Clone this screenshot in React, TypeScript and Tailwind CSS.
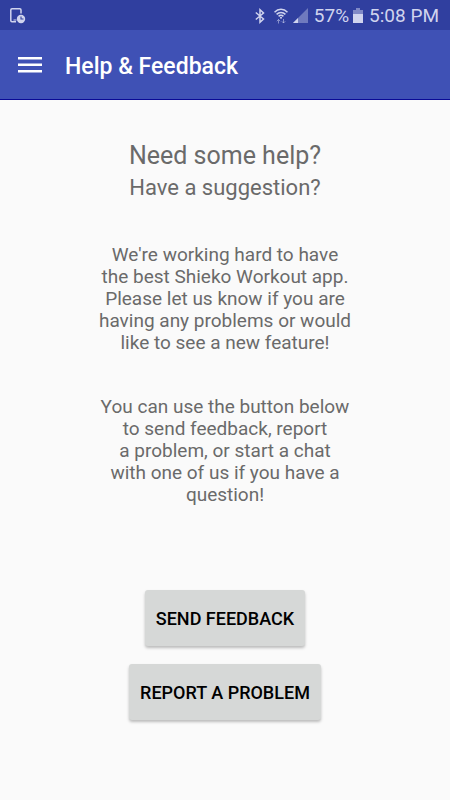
import React from 'react';

const intro = [
    "We're working hard to have",
    "the best Shieko Workout app.",
    "Please let us know if you are",
    "having any problems or would",
    "like to see a new feature!",
];

const instructions = [
    "You can use the button below",
    "to send feedback, report",
    "a problem, or start a chat",
    "with one of us if you have a",
    "question!",
];

const actions = ["Send feedback", "Report a problem"];

function StatusBar() {
    return (
        <div className="flex h-[30px] items-center justify-between bg-[#303f9f] pl-[10px] pr-[11px] pt-px text-[#d0d4ee]">
            <svg width="16" height="16" viewBox="0 0 16 16" fill="none">
                <path d="M11 5.5V2a1.2 1.2 0 0 0-1.2-1.2H2A1.2 1.2 0 0 0 .8 2v10.5a1.2 1.2 0 0 0 1.2 1.2h4" stroke="currentColor" strokeWidth="1.5" />
                <path d="M3.5 12h3" stroke="currentColor" />
                <circle cx="11" cy="11" r="4.2" fill="currentColor" />
                <path d="M11 8.5V11h2.5" stroke="#303f9f" strokeWidth="1.1" />
            </svg>
            <div className="flex items-center">
                <svg width="10" height="16" viewBox="0 0 10 16" fill="none" stroke="currentColor" strokeWidth="1.5">
                    <path d="M.8 4.5 8.5 11 5 14.2V1.800L8.500 5 .8 11.500" />
                </svg>
                <svg className="ml-[9px]" width="14" height="16" viewBox="0 0 14 16" fill="none" stroke="currentColor">
                    <path d="M.5 4.200C4.200.4 9.800.4 13.500 4.200M2.600 6.400c2.500-2.500 6.300-2.500 8.800 0M4.600 8.400c1.400-1.400 3.400-1.400 4.800 0" strokeWidth="1.5" />
                    <circle cx="7" cy="9.800" r="1" fill="currentColor" stroke="none" />
                    <path d="M4.500 15.500v-4M2.800 13.200l1.700-1.700 1.700 1.700M9.500 11v4M7.800 13.300l1.700 1.700 1.700-1.700" opacity=".55" />
                </svg>
                <svg className="ml-[5px]" width="15" height="15" viewBox="0 0 15 15" fill="currentColor">
                    <path d="M15 0v15H0z" opacity=".4" />
                    <path d="M5 10v5H0z" />
                </svg>
                <span className="ml-[6px] text-[19px] leading-[22px]">57%</span>
                <svg className="ml-1" width="10" height="15" viewBox="0 0 10 15" fill="currentColor">
                    <path d="M3 0h4v2h3v4H0V2h3z" opacity=".5" />
                    <path d="M0 6h10v9H0z" />
                </svg>
                <span className="ml-[6px] text-[19px] leading-[22px]">5:08 PM</span>
            </div>
        </div>
    );
}

function Paragraph({ lines }: { lines: string[] }) {
    return (
        <p className="text-[19px] leading-[22px]">
            {lines.map((line) => (
                <span key={line} className="block">{line}</span>
            ))}
        </p>
    );
}

export default function App() {
    return (
        <div className="min-h-screen bg-[#fafafa] font-['Roboto',sans-serif]">
            <StatusBar />
            <header className="flex h-[70px] items-center border-b border-[#0a0a96] bg-[#3f51b5] px-[18px] pt-1 text-white">
                <button type="button" aria-label="Open menu">
                    <svg width="24" height="20" viewBox="0 0 24 20" fill="currentColor">
                        <path d="M0 0h24v2.500H0zM0 6.500h24V9H0zM0 13h24v2.500H0z" />
                    </svg>
                </button>
                <h1 className="ml-[23px] text-[23px] font-medium leading-7">Help &amp; Feedback</h1>
            </header>
            <main className="flex flex-col items-center px-6 pt-10 text-center text-[#6a6a6a]">
                <h2 className="text-[25px] leading-8">Need some help?</h2>
                <h3 className="text-[22px] leading-8">Have a suggestion?</h3>
                <div className="mt-10 flex flex-col gap-[42px]">
                    <Paragraph lines={intro} />
                    <Paragraph lines={instructions} />
                </div>
                <div className="mt-[84px] flex flex-col items-center gap-[18px]">
                    {actions.map((label) => (
                        <button
                            key={label}
                            type="button"
                            className="h-14 rounded-[3px] bg-[#d6d8d7] px-[11px] text-[18px] font-medium uppercase text-black shadow-[0_2px_3px_rgba(0,0,0,0.25)]"
                        >
                            {label}
                        </button>
                    ))}
                </div>
            </main>
        </div>
    );
}
